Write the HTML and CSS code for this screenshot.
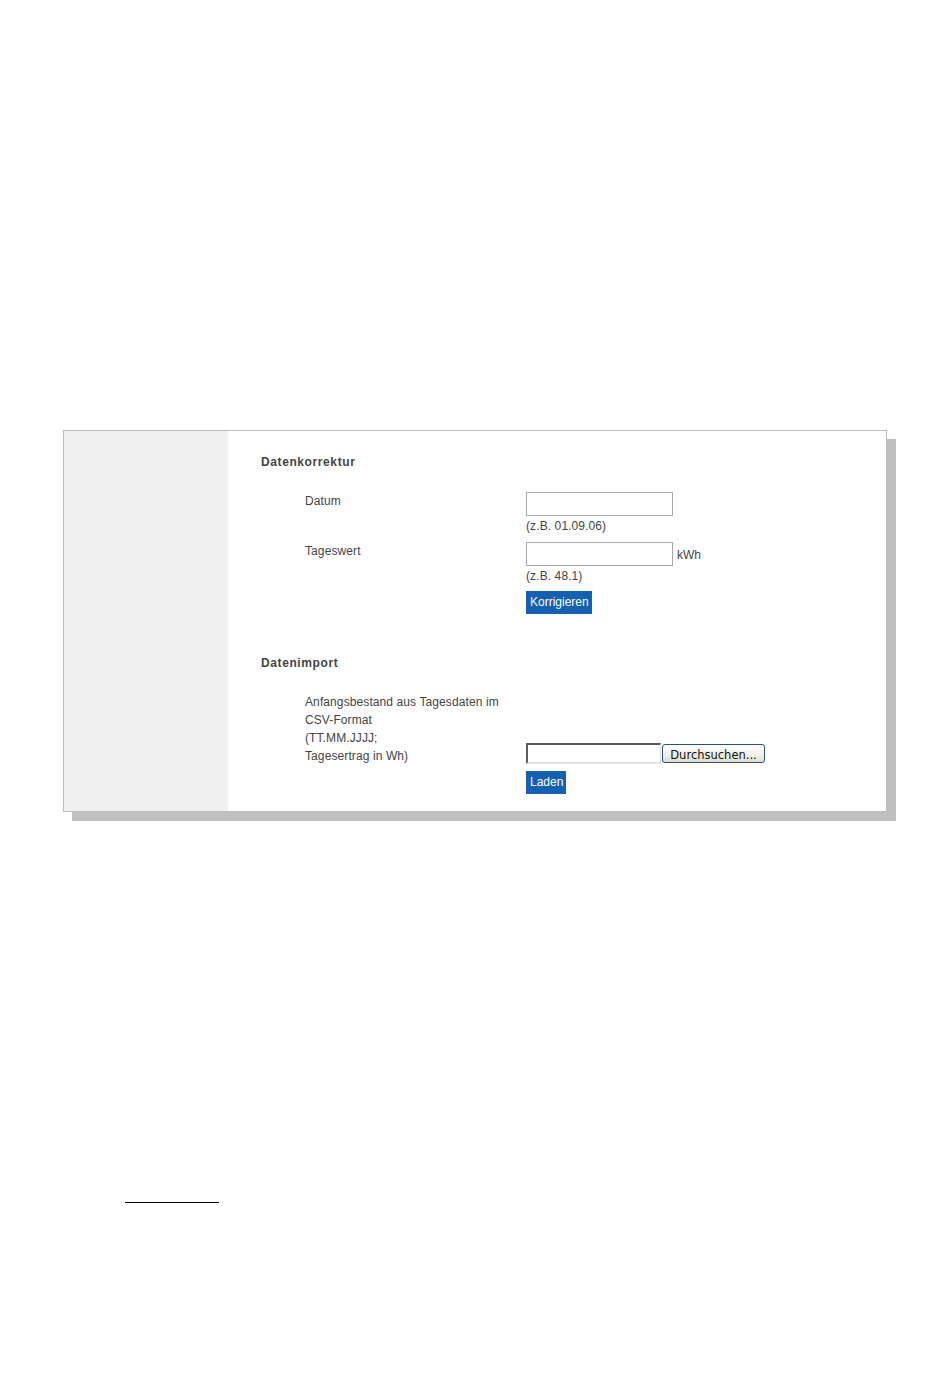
FILE: index.html
```html
<!DOCTYPE html>
<html lang="de">
<head>
<meta charset="utf-8">
<title>Daten</title>
<link rel="stylesheet" href="styles.css">
</head>
<body>
<div class="page">
  <div class="panel">
    <div class="sidebar"></div>
    <div class="content">
      <h2 class="heading">Datenkorrektur</h2>
      <div class="row row-datum">
        <div class="label">Datum</div>
        <div class="field">
          <input class="text" type="text">
          <div class="hint">(z.B. 01.09.06)</div>
        </div>
      </div>
      <div class="row row-wert">
        <div class="label">Tageswert</div>
        <div class="field">
          <div class="inline"><input class="text" type="text"><span class="unit">kWh</span></div>
          <div class="hint">(z.B. 48.1)</div>
          <button class="btn btn-korr" type="button">Korrigieren</button>
        </div>
      </div>

      <h2 class="heading heading-import">Datenimport</h2>
      <div class="row row-import">
        <div class="label label-multi">Anfangsbestand aus Tagesdaten im<br>CSV-Format<br>(TT.MM.JJJJ;<br>Tagesertrag in Wh)</div>
        <div class="field field-file">
          <div class="file"><span class="file-box"></span><button class="browse" type="button">Durchsuchen...</button></div>
        </div>
      </div>
      <div class="row row-laden">
        <div class="label"></div>
        <div class="field"><button class="btn btn-laden" type="button">Laden</button></div>
      </div>
    </div>
  </div>
  <div class="footnote-rule"></div>
</div>
</body>
</html>
```
FILE: styles.css
```css
html, body {
  margin: 0;
  padding: 0;
  background: #ffffff;
}
body {
  font-family: "Liberation Sans", Arial, sans-serif;
  font-size: 12px;
  color: #444444;
}
.page {
  width: 950px;
  height: 1397px;
  padding-top: 430px;
  box-sizing: border-box;
}
.panel {
  margin-left: 63px;
  width: 824px;
  height: 382px;
  box-sizing: border-box;
  border: 1px solid #bdbdbd;
  box-shadow: 9px 9px 0 #c0c0c0;
  display: flex;
  background: #ffffff;
}
.sidebar {
  width: 164px;
  background: #f0f0f0;
  flex: none;
}
.content {
  flex: 1;
  padding: 24px 0 0 33px;
}
.heading {
  margin: 0;
  font-size: 12px;
  line-height: 14px;
  font-weight: bold;
  color: #444444;
  letter-spacing: 0.6px;
}
.row {
  display: grid;
  grid-template-columns: 221px auto;
  padding-left: 44px;
}
.row-datum { margin-top: 23px; }
.row-wert { margin-top: 9px; }
.label {
  line-height: 14px;
  padding-top: 2px;
  letter-spacing: 0.1px;
}
.text {
  display: block;
  width: 147px;
  height: 24px;
  box-sizing: border-box;
  border: 1px solid #a9a9a9;
  margin: 0;
  padding: 0;
  background: #fff;
}
.hint {
  margin-top: 3px;
  line-height: 14px;
  letter-spacing: 0.1px;
}
.inline {
  display: flex;
  align-items: center;
}
.unit {
  margin-left: 4px;
  padding-top: 1px;
}
.btn {
  display: block;
  border: 0;
  margin: 0;
  padding: 0 4px;
  height: 23px;
  background: #1560b0;
  color: #ffffff;
  font-family: "Liberation Sans", Arial, sans-serif;
  font-size: 12px;
  line-height: 23px;
}
.btn-korr {
  margin-top: 8px;
  width: 66px;
}
.heading-import { margin-top: 42px; }
.row-import {
  margin-top: 23px;
  align-items: end;
}
.label-multi {
  line-height: 18px;
  padding-top: 0;
  margin-top: 0;
}
.field-file {
  padding-bottom: 1px;
}
.file {
  display: flex;
  align-items: flex-start;
}
.file-box {
  display: block;
  width: 135px;
  height: 21px;
  box-sizing: border-box;
  border-top: 2px solid #5a5a5a;
  border-left: 2px solid #5a5a5a;
  border-right: 1px solid #e3e3e3;
  border-bottom: 2px solid #e3e3e3;
  background: #fff;
}
.browse {
  margin: 1px 0 0 1px;
  width: 103px;
  height: 19px;
  box-sizing: border-box;
  border: 1px solid #2b4f7e;
  border-radius: 3px;
  background: linear-gradient(#ffffff, #f0efe8 60%, #dedbcc);
  font-family: "DejaVu Sans", Tahoma, sans-serif;
  font-size: 11.5px;
  color: #111;
  padding: 3px 0 0;
  line-height: 14px;
}
.row-laden { margin-top: 6px; }
.btn-laden { width: 40px; }
.footnote-rule {
  margin: 390px 0 0 125px;
  width: 94px;
  height: 1px;
  background: #000;
}
```
